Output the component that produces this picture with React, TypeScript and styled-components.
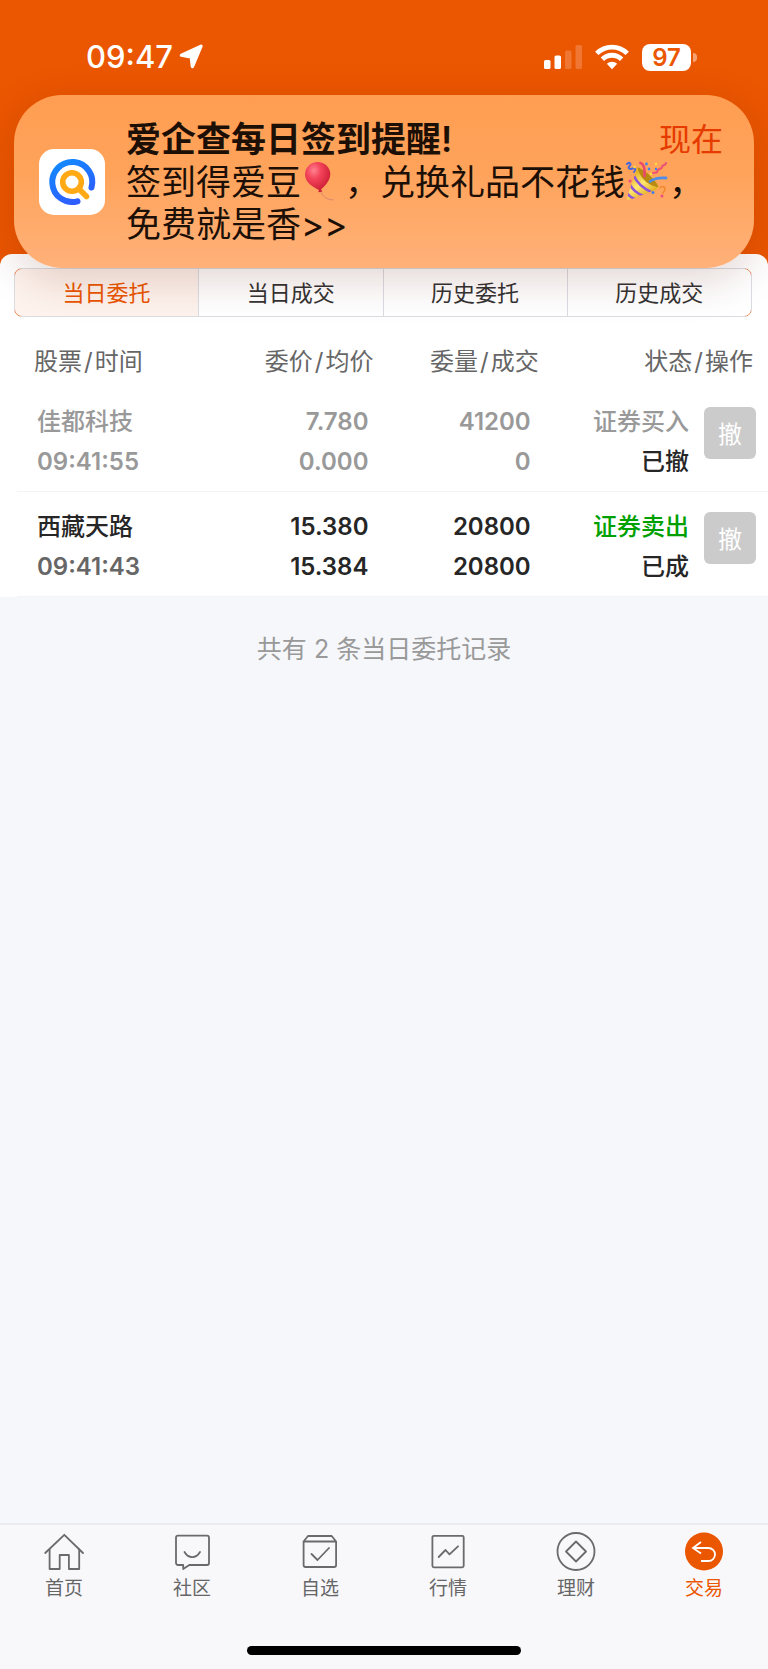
import React from "react";
import styled, { createGlobalStyle } from "styled-components";

const orange = "#eb5600";
const cjk = `Inter, "Noto Sans CJK SC", sans-serif`;

const GlobalStyle = createGlobalStyle`
  *, *::before, *::after { box-sizing: border-box; }
  body { margin: 0; background: #f6f7fa; font-family: ${cjk}; color: #262626; }
  button { font-family: inherit; padding: 0; margin: 0; cursor: pointer; }
`;

const Page = styled.div`
  position: relative;
  display: flex;
  flex-direction: column;
  min-height: 100vh;
  overflow: hidden;
`;

const Hero = styled.header`
  height: 266px;
  margin-bottom: -12px;
  background: ${orange};
`;

const StatusBar = styled.div`
  display: flex;
  justify-content: space-between;
  align-items: center;
  padding: 36px 71px 0 86px;
  height: 78px;
  color: #fff;
`;

const StatusGroup = styled.div<{ $gap: number }>`
  display: flex;
  align-items: center;
  gap: ${(p) => p.$gap}px;
`;

const Clock = styled.time`
  font-size: 31px;
  line-height: 40px;
  font-weight: 500;
`;

const Battery = styled.div`
  display: flex;
  align-items: center;
  gap: 2px;
`;

const BatteryLevel = styled.span`
  width: 49px;
  height: 27px;
  border-radius: 8px;
  background: #fff;
  color: ${orange};
  font-size: 24px;
  line-height: 27px;
  font-weight: 600;
  text-align: center;
`;

const BatteryTip = styled.span`
  width: 4px;
  height: 9px;
  border-radius: 0 4px 4px 0;
  background: rgba(255, 255, 255, 0.45);
`;

const Banner = styled.aside`
  position: absolute;
  z-index: 2;
  top: 95px;
  left: 14px;
  right: 14px;
  display: flex;
  align-items: center;
  gap: 21px;
  padding: 23px 31px 23px 25px;
  border-radius: 48px;
  background: linear-gradient(180deg, #ff9e52 0%, #ffa35b 45%, #ffb179 100%);
  box-shadow: 0 12px 44px rgba(90, 20, 0, 0.18);
  color: #1c0f06;
`;

const AppIcon = styled.div`
  flex: none;
  width: 66px;
  height: 66px;
  border-radius: 15px;
  background: #fff;
`;

const BannerText = styled.div`
  flex: 1;
  min-width: 0;
`;

const BannerHead = styled.div`
  display: flex;
  justify-content: space-between;
`;

const BannerTitle = styled.h2`
  margin: 0;
  font-size: 35px;
  line-height: 43px;
  font-weight: 600;
`;

const BannerTime = styled.time`
  font-size: 32px;
  line-height: 43px;
  color: #e63b00;
`;

const BannerBody = styled.p`
  margin: 0;
  font-size: 35px;
  line-height: 42px;
`;

const Emoji = styled.svg`
  width: 44px;
  height: 42px;
  vertical-align: top;
`;

const Sheet = styled.main`
  background: #fff;
  border-radius: 12px 12px 0 0;
  padding-top: 14px;
`;

const Tabs = styled.div`
  position: relative;
  display: flex;
  margin: 0 16px 0 14px;
  border-radius: 8px;
  overflow: hidden;
  &::before {
    content: "";
    position: absolute;
    inset: 0;
    border: 1px solid #ee8a55;
    border-radius: 8px;
  }
`;

const Tab = styled.button<{ $active?: boolean }>`
  position: relative;
  flex: 1;
  height: 49px;
  padding-bottom: 4px;
  border: 1px solid #dadce2;
  border-left-width: ${(p) => (p.$active ? 1 : 0)}px;
  background: ${(p) => (p.$active ? "rgba(235, 86, 0, 0.07)" : "transparent")};
  color: ${(p) => (p.$active ? orange : "#333")};
  font-size: 22px;
`;

const Orders = styled.table`
  width: calc(100% - 17px);
  margin-left: 17px;
  table-layout: fixed;
  border-collapse: separate;
  border-spacing: 0;
`;

const Col = styled.col<{ $width?: string }>`
  width: ${(p) => p.$width ?? "auto"};
`;

const HeadCell = styled.th<{ $align?: string; $right?: number }>`
  height: 70px;
  padding: 20px ${(p) => p.$right ?? 0}px 0 ${(p) => (p.$align ? 0 : 17)}px;
  font-size: 24px;
  line-height: 50px;
  font-weight: 400;
  color: #666;
  text-align: ${(p) => p.$align ?? "left"};
  white-space: nowrap;
`;

const Slash = styled.span`
  padding: 0 2px;
`;

const Cell = styled.td<{ $align?: string; $right?: number }>`
  height: 105px;
  padding: 15px ${(p) => p.$right ?? 0}px 9px ${(p) => (p.$align ? 0 : 20)}px;
  border-bottom: 1px solid #f3f4f7;
  text-align: ${(p) => p.$align ?? "left"};
  vertical-align: top;
  white-space: nowrap;
`;

const Line = styled.div<{ $color: string }>`
  font-size: 24px;
  line-height: 40px;
  font-weight: 500;
  color: ${(p) => p.$color};
`;

const Figure = styled(Line)`
  font-weight: 600;
`;

const ActionCell = styled(Cell)`
  padding: 20px 12px 0 15px;
`;

const CancelButton = styled.button`
  display: block;
  width: 52px;
  height: 52px;
  padding-bottom: 2px;
  border: 0;
  border-radius: 6px;
  background: #cbcbcb;
  color: #fff;
  font-size: 24px;
`;

const Summary = styled.p`
  flex: 1;
  margin: 0;
  padding-top: 32px;
  font-size: 25px;
  line-height: 40px;
  color: #999;
  text-align: center;
`;

const BottomBar = styled.footer`
  border-top: 2px solid #ebecef;
  background: #f8f8fb;
  padding: 5px 0 14px;
`;

const Nav = styled.nav`
  display: flex;
`;

const NavLink = styled.a<{ $active?: boolean }>`
  flex: 1;
  display: flex;
  flex-direction: column;
  align-items: center;
  gap: 3px;
  font-size: 19px;
  line-height: 24px;
  text-decoration: none;
  color: ${(p) => (p.$active ? orange : "#666")};
`;

const HomeIndicator = styled.div`
  width: 274px;
  height: 9px;
  margin: 45px auto 0;
  border-radius: 5px;
  background: #000;
`;

const NavIcon = ({ children }: { children: React.ReactNode }) => (
  <svg width="44" height="44" viewBox="0 0 44 44" fill="none" stroke="#6a6a6a" strokeWidth="1.8" strokeLinejoin="round" strokeLinecap="round" aria-hidden="true">
    {children}
  </svg>
);

const navItems = [
  {
    label: "首页",
    icon: (
      <>
        <path d="M3.2 23 22.3 4.8 41 23" />
        <path d="M7.6 19.5V39h10.1V25h9.2v14h10.3V19.5" />
      </>
    ),
  },
  {
    label: "社区",
    icon: (
      <>
        <path d="M8 5.6h29a2 2 0 0 1 2 2V33a2 2 0 0 1-2 2H19.3L13.2 39v-4H8a2 2 0 0 1-2-2V7.6a2 2 0 0 1 2-2Z" />
        <path d="M14.5 22c4 6.8 11.5 6.8 15.5 0" />
      </>
    ),
  },
  {
    label: "自选",
    icon: (
      <>
        <path d="M5.6 11.5h32.5V35a2 2 0 0 1-2 2H7.6a2 2 0 0 1-2-2V11.500L10 6h23.700l4.400 5.500" />
        <path d="m13.5 24 6 6L31 18" />
      </>
    ),
  },
  {
    label: "行情",
    icon: (
      <>
        <rect x="6.4" y="5.8" width="31.3" height="31.5" rx="1.5" />
        <path d="m12.7 27 6.8-7 4 4.3 8.500-8" />
      </>
    ),
  },
  {
    label: "理财",
    icon: (
      <>
        <circle cx="22" cy="21.5" r="18.5" />
        <path d="M22 11.5 32 21.5 22 31.5 12 21.5Z" />
      </>
    ),
  },
  {
    label: "交易",
    active: true,
    icon: (
      <>
        <circle cx="22" cy="21.5" r="19" fill={orange} stroke="none" />
        <path d="M19 12l-8 6 8 5.5M11 18h15.5a6.5 6.5 0 0 1 0 13H19" stroke="#fff" strokeLinejoin="miter" strokeLinecap="butt" />
      </>
    ),
  },
];

const Balloon = () => (
  <Emoji viewBox="0 0 44 42" role="img" aria-label="🎈">
    <defs>
      <radialGradient id="balloon" cx="0.35" cy="0.28" r="0.8">
        <stop offset="0" stopColor="#ff8290" />
        <stop offset="0.35" stopColor="#f3445a" />
        <stop offset="1" stopColor="#c5162f" />
      </radialGradient>
    </defs>
    <path d="M19.500 30c2 6 6 8.500 13.500 9" fill="none" stroke="#d98a72" strokeWidth="1" />
    <path d="M16.500 1C9.500 1 4 6.500 4 13.500c0 7.500 7.500 12.500 14 15.500l-.8 2.200 4.200-.7-1.400-2c5-4.500 9.300-9.500 9.300-15.500C29.300 6.500 23.500 1 16.500 1Z" fill="url(#balloon)" />
  </Emoji>
);

const Popper = () => (
  <Emoji viewBox="0 0 44 42" role="img" aria-label="🎉">
    <defs>
      <linearGradient id="cone" x1="0.2" y1="0.3" x2="0.7" y2="1">
        <stop offset="0" stopColor="#e3b422" />
        <stop offset="0.35" stopColor="#ffe772" />
        <stop offset="0.7" stopColor="#e0b01e" />
        <stop offset="1" stopColor="#a87408" />
      </linearGradient>
      <clipPath id="coneShape">
        <path d="M12.500 6C20 9 31 18 33.500 25.500 33.500 27 32 28 30 29L4.500 39c-1.800.5-3-.6-2.500-2.500Z" />
      </clipPath>
    </defs>
    <g clipPath="url(#coneShape)">
      <path d="M0 0h44v42H0Z" fill="url(#cone)" />
      <path d="M12.500 6C20 9 31 18 33.500 26 25 26 14 17 12.500 6Z" fill="#b98a12" />
      <path d="M9 15c3 7 10 12.500 17 16" fill="none" stroke="#8f55d8" strokeWidth="2.600" />
      <path d="M5 23.500c2.500 5 7 9 13 11" fill="none" stroke="#8f55d8" strokeWidth="2.600" />
      <path d="M2 31.500c1.500 3 4 5 8 6.500" fill="none" stroke="#8f55d8" strokeWidth="2.600" />
    </g>
    <g fill="none" strokeWidth="2" strokeLinecap="round">
      <path d="M2 3c3-2.500 4.500 0 2.500 2s0 4 3 2.500 3.500 1 1.500 3.500" stroke="#4a68d8" />
      <path d="M15.500 2c4 1 4.500 6 4 13" stroke="#ea4a6a" strokeWidth="2.800" />
      <path d="M41 2c0 3-3.500 1-4 4s-4 1-4.500 4-3 1-4.500 2" stroke="#ee4f78" />
      <path d="M25 20.500c4-3 9-4 16-3.500" stroke="#4b8de8" strokeWidth="2.800" />
      <path d="M35 27c2-3 5.500-1 5 1.500s-2 2-2 4" stroke="#f08a2c" strokeWidth="1.500" />
    </g>
    <g fill="#3f83ea">
      <circle cx="21.500" cy="3" r="1.400" />
      <circle cx="24" cy="8" r="1.400" />
      <circle cx="28" cy="31.500" r="1.500" />
      <circle cx="31" cy="8" r="1.200" />
    </g>
    <g fill="#ed4f7c">
      <circle cx="5" cy="20" r="1.500" />
      <circle cx="37" cy="35" r="1.500" />
    </g>
    <g fill="#ffdf3f">
      <circle cx="9.500" cy="6" r="1.300" />
      <circle cx="26" cy="13" r="1.200" />
      <circle cx="31" cy="3" r="1.200" />
    </g>
  </Emoji>
);

const muted = "#999";
const ink = "#262626";

const orders = [
  { name: "佳都科技", time: "09:41:55", price: "7.780", avg: "0.000", qty: "41200", done: "0", side: "证券买入", status: "已撤", main: muted, timeColor: muted, sideColor: muted },
  { name: "西藏天路", time: "09:41:43", price: "15.380", avg: "15.384", qty: "20800", done: "20800", side: "证券卖出", status: "已成", main: ink, timeColor: "#666", sideColor: "#00a000" },
];

export default function App() {
  return (
    <Page>
      <GlobalStyle />
      <Hero>
        <StatusBar>
          <StatusGroup $gap={6}>
            <Clock>09:47</Clock>
            <svg width="25" height="26" viewBox="0 0 25 26" aria-hidden="true">
              <path d="M2.500 11.200 22 2.200 13.400 22.500 12.400 13.200Z" fill="#fff" stroke="#fff" strokeWidth="3.400" strokeLinejoin="round" />
            </svg>
          </StatusGroup>
          <StatusGroup $gap={13}>
            <svg width="38" height="26" viewBox="0 0 38 26" fill="#fff" aria-hidden="true">
              <rect x="0" y="16" width="6.500" height="9" rx="1.600" />
              <rect x="10.500" y="11.500" width="6.500" height="13.500" rx="1.600" />
              <rect x="21" y="6.500" width="6.500" height="18.500" rx="1.600" opacity="0.2" />
              <rect x="31.500" y="1" width="6.500" height="24" rx="1.600" opacity="0.2" />
            </svg>
            <svg width="34" height="26" viewBox="0 0 34 26" fill="none" stroke="#fff" strokeWidth="4.800" aria-hidden="true">
              <path d="M1.800 9.400a21.500 21.500 0 0 1 30.400 0" />
              <path d="M7.400 15.200a13.600 13.600 0 0 1 19.200 0" />
              <path d="M17 25.200 11.800 19.800a7.400 7.400 0 0 1 10.400 0Z" fill="#fff" stroke="none" />
            </svg>
            <Battery>
              <BatteryLevel>97</BatteryLevel>
              <BatteryTip />
            </Battery>
          </StatusGroup>
        </StatusBar>
      </Hero>

      <Banner>
        <AppIcon>
          <svg width="66" height="66" viewBox="0 0 66 66" fill="none" strokeLinecap="round" aria-hidden="true">
            <defs>
              <linearGradient id="ring" x1="0.2" y1="0" x2="0.7" y2="1">
                <stop offset="0" stopColor="#1288ff" />
                <stop offset="1" stopColor="#2f5bff" />
              </linearGradient>
            </defs>
            <path d="M52.500 38.500A20 20 0 1 0 38.500 52.300" stroke="url(#ring)" strokeWidth="6" />
            <circle cx="33" cy="33" r="9.300" stroke="#ffaa14" strokeWidth="5.600" />
            <path d="m41 41 6.500 6.500" stroke="#ffaa14" strokeWidth="5.600" />
          </svg>
        </AppIcon>
        <BannerText>
          <BannerHead>
            <BannerTitle>爱企查每日签到提醒!</BannerTitle>
            <BannerTime>现在</BannerTime>
          </BannerHead>
          <BannerBody>
            签到得爱豆<Balloon />，兑换礼品不花钱<Popper />，免费就是香&gt;&gt;
          </BannerBody>
        </BannerText>
      </Banner>

      <Sheet>
        <Tabs role="tablist">
          <Tab role="tab" aria-selected="true" $active>当日委托</Tab>
          <Tab role="tab" aria-selected="false">当日成交</Tab>
          <Tab role="tab" aria-selected="false">历史委托</Tab>
          <Tab role="tab" aria-selected="false">历史成交</Tab>
        </Tabs>
        <Orders>
          <colgroup>
            <Col $width="25%" />
            <Col $width="23%" />
            <Col $width="22%" />
            <Col />
            <Col $width="79px" />
          </colgroup>
          <thead>
            <tr>
              <HeadCell>股票<Slash>/</Slash>时间</HeadCell>
              <HeadCell $align="right" $right={4}>委价<Slash>/</Slash>均价</HeadCell>
              <HeadCell $align="right" $right={4}>委量<Slash>/</Slash>成交</HeadCell>
              <HeadCell $align="right" $right={15} colSpan={2}>状态<Slash>/</Slash>操作</HeadCell>
            </tr>
          </thead>
          <tbody>
            {orders.map((o) => (
              <tr key={o.time}>
                <Cell>
                  <Line $color={o.main}>{o.name}</Line>
                  <Figure $color={o.timeColor}>{o.time}</Figure>
                </Cell>
                <Cell $align="right" $right={9}>
                  <Figure $color={o.main}>{o.price}</Figure>
                  <Figure $color={o.main}>{o.avg}</Figure>
                </Cell>
                <Cell $align="right" $right={12}>
                  <Figure $color={o.main}>{o.qty}</Figure>
                  <Figure $color={o.main}>{o.done}</Figure>
                </Cell>
                <Cell $align="right">
                  <Line $color={o.sideColor}>{o.side}</Line>
                  <Line $color={ink}>{o.status}</Line>
                </Cell>
                <ActionCell>
                  <CancelButton type="button" aria-label={`撤 ${o.name}`}>撤</CancelButton>
                </ActionCell>
              </tr>
            ))}
          </tbody>
        </Orders>
      </Sheet>

      <Summary>共有 2 条当日委托记录</Summary>

      <BottomBar>
        <Nav>
          {navItems.map((item) => (
            <NavLink key={item.label} href="#" $active={item.active} aria-current={item.active ? "page" : undefined}>
              <NavIcon>{item.icon}</NavIcon>
              {item.label}
            </NavLink>
          ))}
        </Nav>
        <HomeIndicator />
      </BottomBar>
    </Page>
  );
}
